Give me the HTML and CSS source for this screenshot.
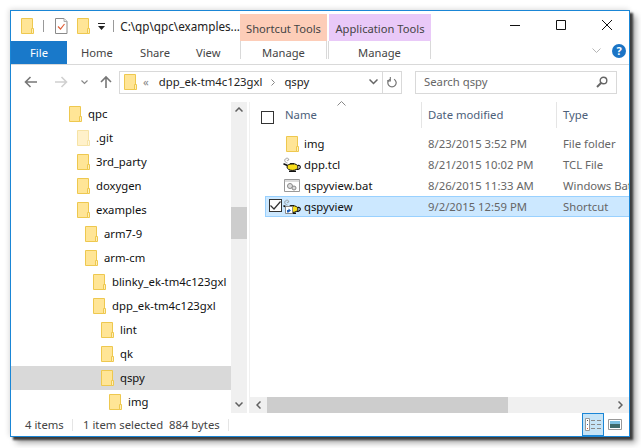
FILE: index.html
```html
<!DOCTYPE html>
<html lang="en">
<head>
<meta charset="utf-8">
<title>qspy</title>
<link rel="stylesheet" href="styles.css">
</head>
<body>
<svg class="defs" width="0" height="0">
  <symbol id="folder" viewBox="0 0 13 16">
    <path d="M.5.500h11v15H.5z" fill="#ffe596" stroke="#eec84f"/>
    <path d="M10.500 10.500h2v5h-2z" fill="#ffefb8" stroke="#eec84f"/>
  </symbol>
  <symbol id="lamp" viewBox="0 0 18 15">
    <path d="M4.500 6C2 5.500 1 3.500 2.300 2 3.800.5 6 1.300 5.700 2.800 5.400 4 3.800 3.800 4 2.800" fill="none" stroke="#888" stroke-width=".8"/>
    <path d="M.5 6.800l4.500 2" stroke="#111" stroke-width="1.600"/>
    <path d="M13.500 8.800c1.500-.8 3.500-.5 3.800 1 .2 1.500-1.500 2.700-4 2.700" fill="none" stroke="#111" stroke-width="1.200"/>
    <ellipse cx="9.500" cy="10" rx="5.500" ry="3.400" fill="#f8de1c" stroke="#111"/>
    <path d="M7 6.800h4" stroke="#111" stroke-width="1.200"/>
    <path d="M6 14.300h7" stroke="#111" stroke-width="1.400"/>
  </symbol>
</svg>
<main class="window">
  <header class="titlebar">
    <div class="qat">
      <svg class="ico16"><use href="#folder"/></svg>
      <span class="qat-sep"></span>
      <svg class="ico-check" viewBox="0 0 13 16"><path d="M.5.500h8.500l3 3v12H.5z" fill="#fff" stroke="#8a8a8a"/><path d="M9 .5v3h3" fill="#eee" stroke="#aaa"/><path d="M3 8.500l2.500 2.500L9.500 6" fill="none" stroke="#e0603a" stroke-width="1.200"/></svg>
      <svg class="ico16"><use href="#folder"/></svg>
      <svg class="qat-drop" viewBox="0 0 7 7"><path d="M0 0h7v1H0zM0 3h7L3.500 7z" fill="#222"/></svg>
      <span class="qat-sep"></span>
      <span class="path-title">C:\qp\qpc\examples...</span>
    </div>
    <div class="context context-short">Shortcut Tools</div>
    <div class="context context-app">Application Tools</div>
    <div class="winbtns">
      <svg class="winbtn" viewBox="0 0 46 30"><path d="M18 14.500h10" stroke="#111"/></svg>
      <svg class="winbtn" viewBox="0 0 46 30"><path d="M18.500 9.500h9v9h-9z" fill="none" stroke="#111"/></svg>
      <svg class="winbtn" viewBox="0 0 46 30"><path d="M18 9l10 10M28 9L18 19" stroke="#111"/></svg>
    </div>
  </header>
  <nav class="tabs">
    <div class="tab-file">File</div>
    <div class="tab">Home</div>
    <div class="tab tab-share">Share</div>
    <div class="tab tab-view">View</div>
    <div class="tab-manage">Manage</div>
    <div class="tab-manage tab-manage-app">Manage</div>
    <div class="tab-right">
      <svg class="chev" viewBox="0 0 9 6"><path d="M.5.500l4 4 4-4" fill="none" stroke="#b5b5b5"/></svg>
      <div class="help">?</div>
    </div>
  </nav>
  <section class="addressrow">
    <svg class="nav-arrow" viewBox="0 0 14 12"><path d="M13 6H2M6.500 1L1.500 6l5 5" fill="none" stroke="#777" stroke-width="1.600"/></svg>
    <svg class="nav-arrow nav-fwd" viewBox="0 0 14 12"><path d="M1 6h11M7.500 1l5 5-5 5" fill="none" stroke="#d0d0d0" stroke-width="1.600"/></svg>
    <svg class="nav-down" viewBox="0 0 7 5"><path d="M.5.500l3 3 3-3" fill="none" stroke="#888" stroke-width="1.200"/></svg>
    <svg class="nav-up" viewBox="0 0 12 14"><path d="M6 13V2M1 7l5-5 5 5" fill="none" stroke="#777" stroke-width="1.600"/></svg>
    <div class="addressbox">
      <svg class="ico16"><use href="#folder"/></svg>
      <span class="crumb-more">«</span>
      <span class="crumb">dpp_ek-tm4c123gxl</span>
      <svg class="crumb-sep" viewBox="0 0 4 7"><path d="M.5.500l3 3-3 3" fill="none" stroke="#888"/></svg>
      <span class="crumb">qspy</span>
      <svg class="addr-drop" viewBox="0 0 9 6"><path d="M.5.500l4 4 4-4" fill="none" stroke="#666" stroke-width="1.500"/></svg>
      <div class="refresh"><svg viewBox="0 0 12 13" width="10" height="11"><path d="M8.500 2.500a5 5 0 1 1-5 0" fill="none" stroke="#777" stroke-width="1.500"/><path d="M4 0v4.500H0" fill="none" stroke="#777" stroke-width="1.300"/></svg></div>
    </div>
    <div class="searchbox">
      <span>Search qspy</span>
      <svg viewBox="0 0 12 12" width="12" height="12"><circle cx="7.500" cy="4.500" r="3.300" fill="none" stroke="#666" stroke-width="1.400"/><path d="M5 7l-4 4" stroke="#666" stroke-width="2"/></svg>
    </div>
  </section>
  <div class="panes">
    <aside class="navpane">
      <ul class="tree">
        <li class="lv0"><svg class="ico16"><use href="#folder"/></svg>qpc</li>
        <li class="lv1 hiddenfolder"><svg class="ico16"><use href="#folder"/></svg><span>.git</span></li>
        <li class="lv1"><svg class="ico16"><use href="#folder"/></svg>3rd_party</li>
        <li class="lv1"><svg class="ico16"><use href="#folder"/></svg>doxygen</li>
        <li class="lv1"><svg class="ico16"><use href="#folder"/></svg>examples</li>
        <li class="lv2"><svg class="ico16"><use href="#folder"/></svg>arm7-9</li>
        <li class="lv2"><svg class="ico16"><use href="#folder"/></svg>arm-cm</li>
        <li class="lv3"><svg class="ico16"><use href="#folder"/></svg>blinky_ek-tm4c123gxl</li>
        <li class="lv3"><svg class="ico16"><use href="#folder"/></svg>dpp_ek-tm4c123gxl</li>
        <li class="lv4"><svg class="ico16"><use href="#folder"/></svg>lint</li>
        <li class="lv4"><svg class="ico16"><use href="#folder"/></svg>qk</li>
        <li class="lv4 current"><svg class="ico16"><use href="#folder"/></svg>qspy</li>
        <li class="lv5"><svg class="ico16"><use href="#folder"/></svg>img</li>
      </ul>
      <div class="vscroll">
        <svg class="sb-arrow" viewBox="0 0 8 5"><path d="M.5 4.500l3.500-3.500 3.500 3.500" fill="none" stroke="#606060" stroke-width="1.500"/></svg>
        <div class="vtrack"><div class="vthumb"></div></div>
        <svg class="sb-arrow" viewBox="0 0 8 5"><path d="M.5.500L4 4 7.500.5" fill="none" stroke="#606060" stroke-width="1.500"/></svg>
      </div>
    </aside>
    <section class="filepane">
      <div class="fileheader">
        <span class="cb"></span>
        <div class="col col-name">Name<svg class="sort" viewBox="0 0 9 5"><path d="M.5 4.500L4.500.5l4 4" fill="none" stroke="#888"/></svg></div>
        <div class="col col-date">Date modified</div>
        <div class="col col-type">Type</div>
      </div>
      <div class="files">
        <div class="file"><span class="slot"><svg class="ico16"><use href="#folder"/></svg></span><span class="f-name">img</span><span class="f-date">8/23/2015 3:52 PM</span><span class="f-type">File folder</span></div>
        <div class="file"><span class="slot"><svg class="lamp"><use href="#lamp"/></svg></span><span class="f-name">dpp.tcl</span><span class="f-date">8/21/2015 10:02 PM</span><span class="f-type">TCL File</span></div>
        <div class="file"><span class="slot"><svg class="bat" viewBox="0 0 16 13"><path d="M.5.500h15v12H.5z" fill="#fff" stroke="#999"/><path d="M.5 2h15" stroke="#bbb"/><circle cx="6" cy="7" r="2.500" fill="#ddd" stroke="#888"/><circle cx="10" cy="9" r="2" fill="#ddd" stroke="#888"/></svg></span><span class="f-name">qspyview.bat</span><span class="f-date">8/26/2015 11:33 AM</span><span class="f-type">Windows Bat</span></div>
        <div class="file selected"><span class="fcheck"><svg viewBox="0 0 11 9" width="11" height="9"><path d="M.5 4.500l3.500 3.500L10.500.5" fill="none" stroke="#333" stroke-width="1.200"/></svg></span><span class="slot slot-sel"><svg class="lamp"><use href="#lamp"/></svg><svg class="shortcut" viewBox="0 0 8 8"><path d="M.5.500h7v7h-7z" fill="#fff" stroke="#888"/><path d="M2 6.500V4h1.500V2.500L6 4.500 3.500 6.500z" fill="#1f5fb5"/></svg></span><span class="f-name">qspyview</span><span class="f-date">9/2/2015 12:59 PM</span><span class="f-type">Shortcut</span></div>
      </div>
      <div class="hscroll">
        <svg class="sb-harrow" viewBox="0 0 5 8"><path d="M4.500.5L1 4l3.500 3.500" fill="none" stroke="#606060" stroke-width="1.500"/></svg>
        <div class="htrack"><div class="hthumb"></div></div>
        <svg class="sb-harrow" viewBox="0 0 5 8"><path d="M.5.500L4 4 .5 7.500" fill="none" stroke="#606060" stroke-width="1.500"/></svg>
      </div>
    </section>
  </div>
  <footer class="statusbar">
    <span class="st st-items">4 items</span>
    <span class="st st-sel">1 item selected&nbsp; 884 bytes</span>
    <div class="views">
      <div class="viewbtn active"><svg viewBox="0 0 16 13" width="16" height="13"><path d="M.5.500h4v12h-4z" fill="#fff" stroke="#999"/><path d="M2 2h1v1H2z" fill="#555"/><path d="M2 6h1v1H2z" fill="#2b6fc0"/><path d="M2 10h1v1H2z" fill="#d9532c"/><path d="M6 2.500h4M12 2.500h4M6 6.500h4M12 6.500h4M6 10.500h4M12 10.500h4" stroke="#888"/></svg></div>
      <div class="viewbtn viewbtn-large"><svg viewBox="0 0 14 11" width="14" height="11"><path d="M.5.500h13v10H.5z" fill="#fff" stroke="#999"/><path d="M2 2h10v3H2z" fill="#7cc0e0"/><path d="M2 5h10v4H2z" fill="#3d6a6a"/></svg></div>
    </div>
  </footer>
</main>
</body>
</html>
```

FILE: styles.css
```css
* { box-sizing: border-box; }
html, body { margin: 0; padding: 0; background: #fff; }
body { padding: 10px 0 0 10px; width: 641px; height: 448px; overflow: hidden; font: 11.3px/16px "Noto Sans", sans-serif; color: #111; }
.defs { position: absolute; }
svg { display: block; flex: none; }
ul { list-style: none; margin: 0; padding: 0; }

.window {
  width: 620px; height: 427px; border: 1px solid #1a86d6; background: #fff;
  display: flex; flex-direction: column;
  box-shadow: 3px 3px 2px #3c3c3c, 6px 6px 6px #aaa, -1px -1px 5px #ddd;
}
.ico16 { width: 13px; height: 16px; }

.titlebar { height: 30px; display: flex; align-items: flex-end; }
.qat { width: 229px; height: 30px; display: flex; align-items: center; padding-left: 10px; }
.qat-sep { width: 1px; height: 12px; background: #999; margin: 0 11px 0 9px; }
.ico-check { width: 13px; height: 16px; margin-right: 9px; }
.qat-drop { width: 7px; height: 7px; margin-left: 8px; }
.qat-drop + .qat-sep { margin: 0 7px 0 8px; }
.path-title { font-size: 11.7px; color: #222; white-space: nowrap; }
.context { height: 27px; font-size: 11.2px; line-height: 29px; text-align: center; color: #444; }
.context-short { width: 87px; background: #fdcdb8; }
.context-app { width: 102px; margin-left: 2px; background: #e9c9f8; }
.winbtns { display: flex; margin-left: auto; margin-right: -1px; align-self: flex-start; }
.winbtn { width: 46px; height: 30px; }

.tabs { height: 24px; display: flex; border-bottom: 1px solid #d9d9d9; font-size: 11.2px; line-height: 23px; color: #444; }
.tab-file { width: 56px; background: #1979ca; color: #fff; text-align: center; }
.tab { padding-left: 14px; width: 59px; }
.tab-share { width: 58px; }
.tab-view { width: 55px; padding-left: 12px; }
.tab-manage { width: 87px; margin-left: 1px; text-align: center; border-left: 1px solid #d9d9d9; border-right: 1px solid #d9d9d9; margin-bottom: 5px; height: 18px; line-height: 23px; }
.tab-manage-app { width: 103px; }
.tab-right { margin-left: auto; display: flex; align-items: center; gap: 11px; padding: 0 3px 3px 0; }
.chev { width: 9px; height: 6px; }
.help { width: 14px; height: 14px; border-radius: 50%; background: #1b74c5; color: #fff; font: bold 11px/14px "Noto Sans", sans-serif; text-align: center; }

.addressrow { height: 36px; display: flex; align-items: center; padding-left: 13px; padding-bottom: 2px; }
.nav-arrow { width: 14px; height: 12px; }
.nav-fwd { margin-left: 16px; }
.nav-down { width: 7px; height: 5px; margin-left: 13px; }
.nav-up { width: 12px; height: 14px; margin-left: 12px; }
.addressbox { width: 283px; height: 23px; margin-left: 7px; border: 1px solid #d9d9d9; display: flex; align-items: center; padding-left: 4px; color: #222; }
.crumb-more { margin: 0 10px 0 6px; color: #888; }
.crumb-sep { width: 4px; height: 7px; margin: 0 9px; }
.addr-drop { width: 9px; height: 6px; margin-left: auto; margin-right: 4px; }
.refresh { width: 19px; height: 21px; border-left: 1px solid #d9d9d9; display: flex; align-items: center; justify-content: center; }
.searchbox { width: 202px; height: 23px; margin-left: 13px; border: 1px solid #d9d9d9; display: flex; align-items: center; justify-content: space-between; padding: 0 8px; color: #666; }

.panes { flex: 1; min-height: 0; display: flex; padding-top: 1px; }
.navpane { width: 236px; display: flex; }
.tree { width: 220px; }
.tree li { height: 24px; display: flex; align-items: center; gap: 6px; white-space: nowrap; }
.lv0 { padding-left: 58px; }
.lv1 { padding-left: 66px; }
.lv2 { padding-left: 74px; }
.lv3 { padding-left: 82px; }
.lv4 { padding-left: 90px; }
.lv5 { padding-left: 98px; }
.tree .current { background: #d9d9d9; }
.hiddenfolder svg { opacity: .5; }
.vscroll { width: 16px; height: 311px; background: #f0f0f0; display: flex; flex-direction: column; align-items: center; }
.sb-arrow { width: 8px; height: 5px; margin: 5px 0 6px; }
.vtrack { flex: 1; width: 16px; padding-top: 89px; }
.vthumb { height: 32px; background: #cdcdcd; }

.filepane { flex: 1; min-width: 0; display: flex; flex-direction: column; border-left: 1px solid #f0f0f0; margin-left: 2px; }
.fileheader { height: 31px; display: flex; align-items: center; color: #4c607a; }
.cb { width: 13px; height: 13px; border: 1px solid #333; margin-left: 11px; flex: none; }
.col { height: 26px; line-height: 26px; padding-left: 6px; border-right: 1px solid #e5e5e5; align-self: flex-start; flex: none; }
.col-name { width: 144px; margin-left: 4px; padding-left: 7px; position: relative; }
.col-date { width: 135px; }
.col-type { border-right: 0; }
.sort { position: absolute; left: 59px; top: -1px; width: 9px; height: 5px; }
.files { flex: 1; min-height: 0; overflow: hidden; }
.file { height: 21px; display: flex; align-items: center; margin-left: 15px; white-space: nowrap; position: relative; }
.slot { flex: none; width: 39px; padding-left: 21px; display: flex; position: relative; }
.f-name { flex: none; width: 124px; }
.f-date { flex: none; width: 135px; color: #666; }
.f-type { flex: none; color: #666; }
.lamp { width: 18px; height: 15px; margin-left: -3px; }
.bat { width: 16px; height: 13px; margin-left: -2px; }
.file.selected { background: #cce8ff; border: 1px solid #99d1ff; border-right: 0; }
.fcheck { position: absolute; left: 3px; top: 2px; width: 13px; height: 13px; border: 1px solid #333; background: #fff; display: flex; align-items: center; justify-content: center; }
.slot-sel { width: 38px; padding-left: 20px; }
.shortcut { position: absolute; left: 19px; bottom: 0; width: 8px; height: 8px; }
.hscroll { height: 16px; background: #f0f0f0; display: flex; align-items: center; }
.sb-harrow { width: 5px; height: 8px; margin: 0 6px; }
.htrack { flex: 1; height: 16px; }
.hthumb { width: 241px; height: 16px; background: #cdcdcd; }

.statusbar { height: 23px; display: flex; align-items: center; color: #444; }
.st { white-space: nowrap; height: 12px; line-height: 12px; }
.st-items { width: 62px; padding-left: 14px; border-right: 1px solid #e5e5e5; }
.st-sel { width: 156px; padding-left: 10px; border-right: 1px solid #e5e5e5; }
.views { margin-left: auto; display: flex; align-items: center; gap: 4px; padding-right: 7px; height: 23px; }
.viewbtn { width: 22px; height: 23px; display: flex; align-items: center; justify-content: center; }
.viewbtn-large { width: 14px; }
.viewbtn.active { background: #c6e4f7; border: 1px solid #1a86d6; }
```
